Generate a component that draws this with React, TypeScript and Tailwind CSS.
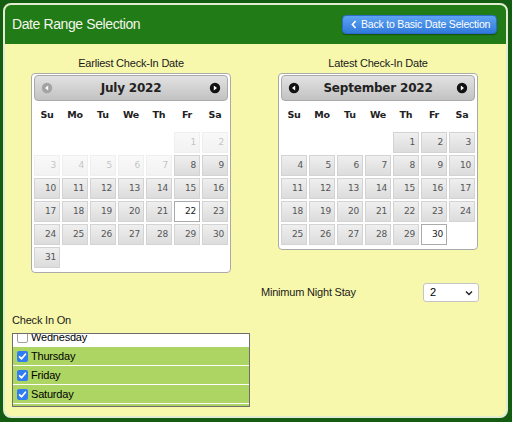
import React from 'react';

type DayState = 'on' | 'off' | 'sel';

const dayNames = ['Su', 'Mo', 'Tu', 'We', 'Th', 'Fr', 'Sa'];

function CircleArrow({ dir, disabled }: { dir: 'l' | 'r'; disabled?: boolean }) {
  const fill = disabled ? '#a3a3a3' : '#111';
  return (
    <svg width="12" height="12" viewBox="0 0 12 12">
      <circle cx="6" cy="6" r="5.2" fill={fill} />
      {dir === 'l' ? (
        <path d="M4 6 L7.2 3.6 L7.2 8.4 Z" fill="#fff" />
      ) : (
        <path d="M8 6 L4.8 3.6 L4.8 8.4 Z" fill="#fff" />
      )}
    </svg>
  );
}

function Calendar({
  title,
  start,
  days,
  state,
  prevDisabled,
}: {
  title: string;
  start: number;
  days: number;
  state: (d: number) => DayState;
  prevDisabled?: boolean;
}) {
  const cells: (number | null)[] = [];
  for (let i = 0; i < start; i++) cells.push(null);
  for (let d = 1; d <= days; d++) cells.push(d);

  return (
    <div className="w-[200px] bg-white border border-[#aaaaaa] rounded-[4px] px-[2px] pt-[1px] pb-[4px]">
      {/* header bar */}
      <div className="h-[26px] rounded-[4px] border border-[#aaaaaa] bg-linear-to-b from-[#e2e2e2] to-[#c2c2c2] flex items-center justify-between px-[6px]">
        <CircleArrow dir="l" disabled={prevDisabled} />
        <span className="font-['DejaVu_Sans',Verdana,sans-serif] font-bold text-[12px] text-[#222]">{title}</span>
        <CircleArrow dir="r" />
      </div>

      <div className="grid grid-cols-7 gap-x-[2px] h-[29px] items-center">
        {dayNames.map((n) => (
          <span key={n} className="text-center font-['DejaVu_Sans',Verdana,sans-serif] font-bold text-[9.5px] text-[#222]">
            {n}
          </span>
        ))}
      </div>

      <div className="grid grid-cols-7 gap-[2px] mt-[2px]">
        {cells.map((d, i) => {
          if (d === null) return <div key={i} className="h-[21px]" />;
          const s = state(d);
          const base =
            'h-[21px] border text-right pr-[3px] leading-[19px] font-["DejaVu_Sans",Verdana,sans-serif] text-[9px]';
          if (s === 'sel')
            return (
              <div key={i} className={`${base} bg-white border-[#aaaaaa] text-[#212121]`}>
                {d}
              </div>
            );
          return (
            <div
              key={i}
              className={`${base} border-[#d3d3d3] bg-linear-to-b from-[#efefef] to-[#dcdcdc] text-[#555555] ${
                s === 'off' ? 'opacity-[0.35]' : ''
              }`}
            >
              {d}
            </div>
          );
        })}
      </div>
    </div>
  );
}

function Check({ on }: { on: boolean }) {
  if (!on)
    return <span className="w-[11px] h-[11px] rounded-[2px] border border-[#a0a0a0] bg-white shrink-0" />;
  return (
    <span className="w-[11px] h-[11px] rounded-[2px] bg-[#2f7cf3] shrink-0 flex items-center justify-center">
      <svg width="9" height="9" viewBox="0 0 9 9">
        <path d="M1.6 4.8 L3.6 6.8 L7.4 2.2" stroke="#fff" strokeWidth="1.7" fill="none" strokeLinecap="round" strokeLinejoin="round" />
      </svg>
    </span>
  );
}

const weekdays: { name: string; on: boolean }[] = [
  { name: 'Wednesday', on: false },
  { name: 'Thursday', on: true },
  { name: 'Friday', on: true },
  { name: 'Saturday', on: true },
];

export default function App() {
  return (
    <div className="min-h-[422px] bg-[#145c11] pt-[3px] pl-[3px] pr-[4px] pb-[4px] font-['Liberation_Sans',Arial,sans-serif]">
      <div className="h-[415px] rounded-[8px] border-2 border-[#e2ecd3] bg-[#f8f8ac] overflow-hidden flex flex-col">
        {/* title bar */}
        <div className="h-[39px] bg-[#217b16] flex items-center justify-between pl-[7px] pr-[9px] shrink-0">
          <span className="text-[14px] tracking-[-0.4px] text-[#f4f6ec]">Date Range Selection</span>
          <button className="w-[155px] h-[19px] rounded-[4px] border border-[#2b6ccc] bg-linear-to-b from-[#5ea3f2] to-[#2f79da] flex items-center pl-[8px] gap-[4px] text-white text-[10.5px] tracking-[-0.2px] shadow-[0_1px_1px_rgba(0,0,0,0.35)]">
            <svg width="6" height="9" viewBox="0 0 6 9">
              <path d="M4.6 1 L1.4 4.5 L4.6 8" stroke="#fff" strokeWidth="1.6" fill="none" />
            </svg>
            Back to Basic Date Selection
          </button>
        </div>

        {/* body */}
        <div className="pt-[13px] text-[11px] tracking-[-0.2px] text-[#1a1a1a]">
          <div className="flex items-start ml-[26px] gap-[47px]">
            <div className="w-[200px] flex flex-col">
              <div className="h-[13px] leading-[13px] text-center">Earliest Check-In Date</div>
              <div className="mt-[3px]">
                <Calendar
                  title="July 2022"
                  start={5}
                  days={31}
                  prevDisabled
                  state={(d) => (d < 8 ? 'off' : d === 22 ? 'sel' : 'on')}
                />
              </div>
            </div>
            <div className="w-[200px] flex flex-col">
              <div className="h-[13px] leading-[13px] text-center">Latest Check-In Date</div>
              <div className="mt-[3px]">
                <Calendar title="September 2022" start={4} days={30} state={(d) => (d === 30 ? 'sel' : 'on')} />
              </div>
            </div>
          </div>

          {/* minimum night stay */}
          <div className="flex items-center ml-[256px] mt-[10px]">
            <span className="w-[162px]">Minimum Night Stay</span>
            <div className="w-[56px] h-[19px] bg-white border border-[#c4c4c4] rounded-[3px] flex items-center justify-between pl-[6px] pr-[5px] text-[11px] text-black">
              <span>2</span>
              <svg width="8" height="6" viewBox="0 0 8 6">
                <path d="M1 1.5 L4 4.5 L7 1.5" stroke="#222" strokeWidth="1.4" fill="none" />
              </svg>
            </div>
          </div>

          {/* check in on */}
          <div className="ml-[7px] mt-[12px] h-[13px] leading-[13px]">Check In On</div>
          <div className="ml-[7px] mt-[6px] w-[238px] h-[74px] border border-[#6e6e6e] bg-[#acd563] overflow-hidden">
            <div className="-mt-[6px]">
              {weekdays.map((w) => (
                <div
                  key={w.name}
                  className={`h-[19px] border-b border-white flex items-center gap-[3px] pl-[4px] text-black ${
                    w.on ? 'bg-[#acd563]' : 'bg-white'
                  }`}
                >
                  <Check on={w.on} />
                  <span>{w.name}</span>
                </div>
              ))}
            </div>
          </div>
        </div>
      </div>
    </div>
  );
}
